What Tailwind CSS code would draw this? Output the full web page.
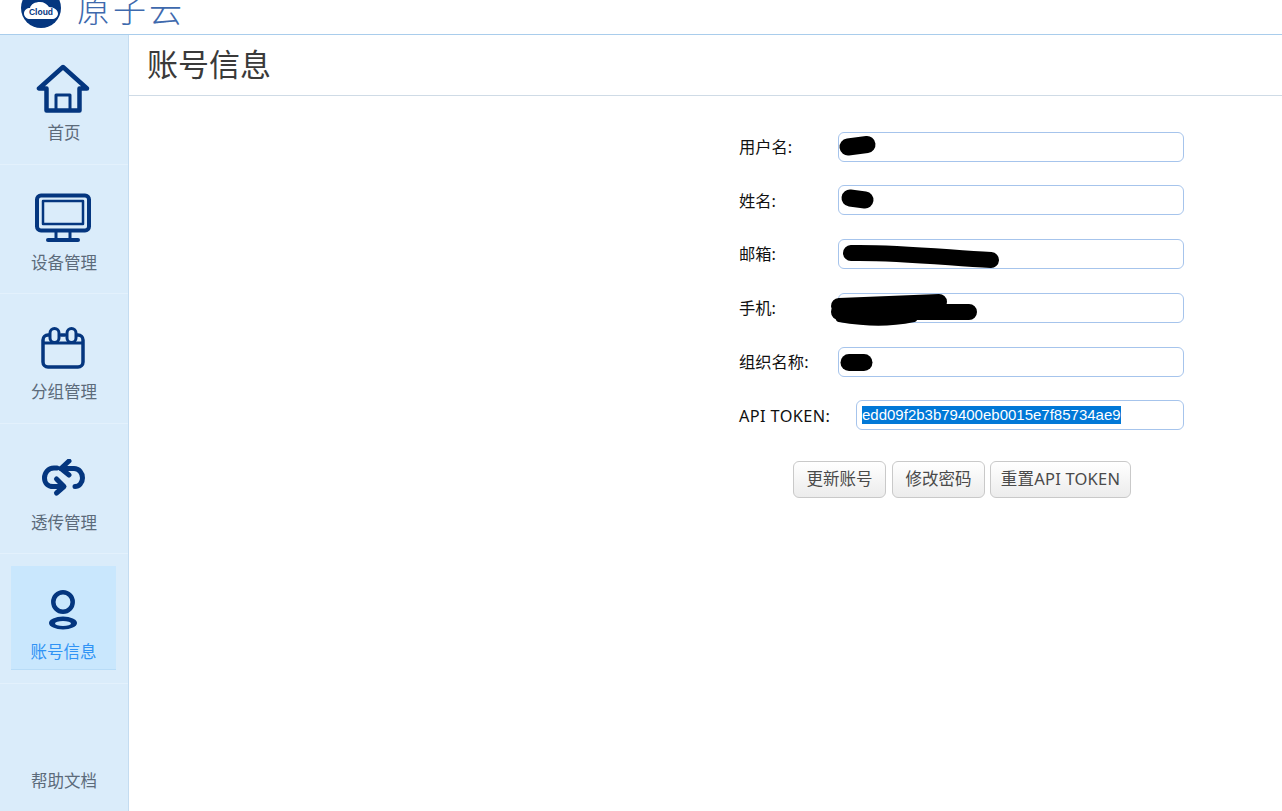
<!DOCTYPE html>
<html lang="zh-CN">
<head>
<meta charset="utf-8">
<script src="https://cdn.jsdelivr.net/npm/@tailwindcss/browser@4"></script>
</head>
<body class="bg-white overflow-hidden font-['Noto_Sans','Noto_Sans_CJK_SC',sans-serif]">
<div class="w-[1282px] h-[811px] flex flex-col overflow-hidden">
  <header class="h-[35px] shrink-0 border-b border-[#a9cdec] flex items-end overflow-hidden pl-[21px] pb-[6px] gap-[16px]">
    <svg class="w-[40px] h-[40px] shrink-0" viewBox="0 0 40 40">
      <circle cx="20" cy="20" r="20" fill="#04367f"/>
      <path d="M9 31c-3 0-6-2-6-5.500S6 20 9 20c1-4 5-6 10-6 4 0 7 2 9 5 5 0 9 3 9 6.500S34 31 31 31z" fill="#fff"/>
      <text x="20" y="26.500" text-anchor="middle" font-size="8.500" font-weight="700" fill="#04367f" font-family="Liberation Sans">Cloud</text>
    </svg>
    <span class="text-[33px] leading-[36px] tracking-[3px] font-light text-[#3e69ad] font-['Noto_Sans_CJK_SC',sans-serif] mb-[2px]">原子云</span>
  </header>
  <div class="flex flex-1 min-h-0">
    <aside class="w-[129px] shrink-0 bg-[#daecfa] border-r border-[#c4dcf0] flex flex-col text-[16.500px] text-[#5c6b7a]">
      <a class="h-[130px] shrink-0 border-b border-[#e3f1fc] flex flex-col items-center pt-[29px]">
        <svg class="w-[54px] h-[50px] mr-[2px]" viewBox="0 0 54 50" fill="none" stroke="#04367f" stroke-width="4.500" stroke-linejoin="round" stroke-linecap="round">
          <path d="M27 3 3 24.500h7.500V46.500h33V24.500H51z"/>
          <path d="M20 46V31h14v15" stroke-width="3"/>
        </svg>
        <span class="mt-[7px] leading-[24px]">首页</span>
      </a>
      <a class="h-[129px] shrink-0 border-b border-[#e3f1fc] flex flex-col items-center pt-[28px]">
        <svg class="w-[58px] h-[50px] mr-[2px]" viewBox="0 0 58 50" fill="none" stroke="#04367f" stroke-linecap="round" stroke-linejoin="round">
          <rect x="3" y="2.500" width="52" height="35" rx="4" stroke-width="4"/>
          <rect x="9" y="8" width="40" height="23" stroke-width="2.500"/>
          <path d="M22 38v8M36 38v8" stroke-width="3"/>
          <path d="M14 47h30" stroke-width="4"/>
        </svg>
        <span class="mt-[8px] leading-[24px]">设备管理</span>
      </a>
      <a class="h-[130px] shrink-0 border-b border-[#e3f1fc] flex flex-col items-center pt-[32px]">
        <svg class="w-[44px] h-[44px] mr-[3px]" viewBox="0 0 44 44" fill="none" stroke="#04367f" stroke-linecap="round" stroke-linejoin="round">
          <path d="M8 9H7a5 5 0 0 0-5 5v22a5 5 0 0 0 5 5h30a5 5 0 0 0 5-5V14a5 5 0 0 0-5-5h-1M20 9h4" stroke-width="3.500"/>
          <path d="M3 17h38" stroke-width="3"/>
          <rect x="9" y="2.500" width="9" height="14" rx="4.500" stroke-width="3"/>
          <rect x="26" y="2.500" width="9" height="14" rx="4.500" stroke-width="3"/>
        </svg>
        <span class="mt-[10px] leading-[24px]">分组管理</span>
      </a>
      <a class="h-[130px] shrink-0 border-b border-[#e3f1fc] flex flex-col items-center pt-[35px]">
        <svg class="w-[44px] h-[40px] mr-[2px]" viewBox="0 0 44 40" fill="none" stroke="#04367f" stroke-width="5" stroke-linecap="round" stroke-linejoin="round">
          <path d="M16 9H13C7 9 3.500 14 3.500 19C3.500 24 7 27.500 12 27.500H22"/>
          <path d="M15.500 20 23 27.500 15.500 34"/>
          <path d="M20 9.500H33C38 9.500 41.500 14 41.500 19C41.500 24 38 27.500 34 27.500"/>
          <path d="M28 2 20 9.500 28 16"/>
        </svg>
        <span class="mt-[12px] leading-[24px]">透传管理</span>
      </a>
      <div class="h-[130px] shrink-0 border-b border-[#e3f1fc] pl-[11px] pr-[12px] pt-[12px]">
        <a class="h-[104px] bg-[#c9e7fd] border-b border-[#b8dcf7] flex flex-col items-center pt-[23px] text-[#2f93f5]">
          <svg class="w-[30px] h-[42px] mr-[1px]" viewBox="0 0 30 42">
            <circle cx="15" cy="13" r="9.700" fill="none" stroke="#04367f" stroke-width="4.500"/>
            <ellipse cx="15" cy="34" rx="14" ry="6.500" fill="#04367f"/>
            <ellipse cx="15" cy="34.500" rx="8" ry="2.500" fill="#c9e7fd"/>
          </svg>
          <span class="mt-[9px] leading-[24px]">账号信息</span>
        </a>
      </div>
      <a class="mt-auto h-[60px] flex items-start justify-center pt-[23px] leading-[24px] mb-[5px]">帮助文档</a>
    </aside>
    <main class="flex-1 flex flex-col min-w-0">
      <div class="h-[61px] shrink-0 border-b border-[#cfdbe6] pl-[18px] flex items-center">
        <h1 class="text-[31px] leading-[40px] text-[#3a3a3a] mt-[-2px]">账号信息</h1>
      </div>
      <div class="flex justify-end pr-[98px] pt-[35.500px]">
        <form class="w-[445px] relative text-[16.300px] text-[#111]">
          <div class="flex flex-col gap-[23.750px]">
            <label class="flex items-center h-[30px]"><span class="w-[99px] shrink-0 pt-[1px]">用户名:</span><span class="flex-1 h-[30px] rounded-[6px] border border-[#a6c4ec]"></span></label>
            <label class="flex items-center h-[30px]"><span class="w-[99px] shrink-0 pt-[1px]">姓名:</span><span class="flex-1 h-[30px] rounded-[6px] border border-[#a6c4ec]"></span></label>
            <label class="flex items-center h-[30px]"><span class="w-[99px] shrink-0 pt-[1px]">邮箱:</span><span class="flex-1 h-[30px] rounded-[6px] border border-[#a6c4ec]"></span></label>
            <label class="flex items-center h-[30px]"><span class="w-[99px] shrink-0 pt-[1px]">手机:</span><span class="flex-1 h-[30px] rounded-[6px] border border-[#a6c4ec]"></span></label>
            <label class="flex items-center h-[30px]"><span class="w-[99px] shrink-0 pt-[1px]">组织名称:</span><span class="flex-1 h-[30px] rounded-[6px] border border-[#a6c4ec]"></span></label>
            <label class="flex items-center h-[30px]"><span class="w-[117px] shrink-0 tracking-[0.4px] pt-[1px]">API TOKEN:</span><span class="flex-1 h-[30px] rounded-[6px] border border-[#a6c4ec] pl-[5px] flex items-center"><span class="bg-[#0078d7] text-white text-[15px] leading-[18px] font-['Liberation_Sans',sans-serif]">edd09f2b3b79400eb0015e7f85734ae9</span></span></label>
          </div>
          <div class="flex mt-[31px] ml-[54px] text-[#4a4a4a] text-[16.500px]">
            <button type="button" class="w-[93px] h-[37px] rounded-[6px] border border-[#c9c9c9] bg-gradient-to-b from-white to-[#ececec]">更新账号</button>
            <button type="button" class="w-[93px] h-[37px] ml-[6px] rounded-[6px] border border-[#c9c9c9] bg-gradient-to-b from-white to-[#ececec]">修改密码</button>
            <button type="button" class="w-[141px] h-[37px] ml-[5px] rounded-[6px] border border-[#c9c9c9] bg-gradient-to-b from-white to-[#ececec] whitespace-nowrap tracking-[0.2px]">重置API TOKEN</button>
          </div>
          <svg class="absolute left-0 top-0 w-[445px] h-[310px] pointer-events-none" viewBox="0 0 445 310" fill="none" stroke="#000" stroke-linecap="round" stroke-linejoin="round">
            <path d="M109 15 128 12.500" stroke-width="17"/>
            <path d="M111 66 126 68" stroke-width="17"/>
            <path d="M112 121C150 120 190 124 252 128" stroke-width="16"/>
            <path d="M100 174 200 170M100 180 230 180" stroke-width="16"/>
            <path d="M100 187C130 192 150 192 175 187" stroke-width="6"/>
            <path d="M110 230.500H125" stroke-width="17"/>
          </svg>
        </form>
      </div>
    </main>
  </div>
</div>
</body>
</html>
